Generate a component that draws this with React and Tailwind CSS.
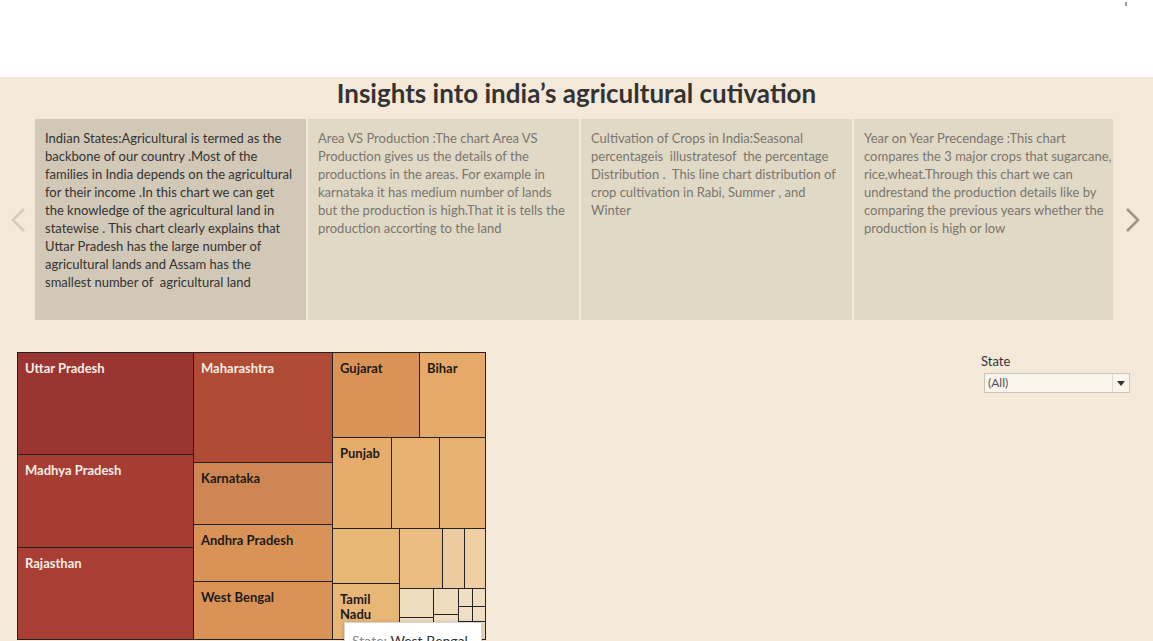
import React from "react";

const cards = [
  {
    active: true,
    lines: [
      "Indian States:Agricultural is termed as the",
      "backbone of our country .Most of the",
      "families in India depends on the agricultural",
      "for their income .In this chart we can get",
      "the knowledge of the agricultural land in",
      "statewise . This chart clearly explains that",
      "Uttar Pradesh has the large number of",
      "agricultural lands and Assam has the",
      "smallest number of  agricultural land",
    ],
  },
  {
    lines: [
      "Area VS Production :The chart Area VS",
      "Production gives us the details of the",
      "productions in the areas. For example in",
      "karnataka it has medium number of lands",
      "but the production is high.That it is tells the",
      "production accorting to the land",
    ],
  },
  {
    lines: [
      "Cultivation of Crops in India:Seasonal",
      "percentageis  illustratesof  the percentage",
      "Distribution .  This line chart distribution of",
      "crop cultivation in Rabi, Summer , and",
      "Winter",
    ],
  },
  {
    lines: [
      "Year on Year Precendage :This chart",
      "compares the 3 major crops that sugarcane,",
      "rice,wheat.Through this chart we can",
      "undrestand the production details like by",
      "comparing the previous years whether the",
      "production is high or low",
    ],
  },
];

function Chevron({ dir, className }) {
  return (
    <svg width="16" height="26" viewBox="0 0 16 26" className={className}>
      {dir === "left" ? (
        <path d="M14 2 L3 13 L14 24" fill="none" stroke="currentColor" strokeWidth="2.6" />
      ) : (
        <path d="M2 2 L13 13 L2 24" fill="none" stroke="currentColor" strokeWidth="2.6" />
      )}
    </svg>
  );
}

function Cell({ className = "", label, light, children }) {
  return (
    <div className={"min-w-0 min-h-0 overflow-hidden pl-[7px] pt-[8px] " + className}>
      {label && (
        <div
          className={
            "text-[13px] leading-[15px] font-bold " +
            (light ? "text-[#f6ece4]" : "text-[#1f1a17]")
          }
        >
          {label}
        </div>
      )}
      {children}
    </div>
  );
}

export default function App() {
  return (
    <div className="w-[1153px] h-[641px] overflow-hidden bg-[#f4e9d8] font-['Lato',sans-serif]">
      <div className="h-[77px] bg-white flex justify-end pr-[26px] pt-[2px]">
        <div className="w-[2px] h-[4px] bg-[#9a9a9a]" />
      </div>

      <h1 className="text-center text-[26px] leading-[32px] font-bold text-[#333333]">
        Insights into india’s agricultural cutivation
      </h1>

      <div className="mt-[10px] flex h-[201px] items-center">
        <div className="w-[35px] flex justify-center items-center text-[#d3cbbb]">
          <Chevron dir="left" />
        </div>
        <div className="w-[1078px] h-[201px] overflow-hidden flex gap-[2px]">
          {cards.map((c, i) => (
            <div
              key={i}
              className={
                "w-[271px] shrink-0 h-full overflow-hidden pl-[10px] pt-[10px] text-[13px] leading-[18px] " +
                (c.active ? "bg-[#d1c8b7] text-[#333333]" : "bg-[#e0d9c6] text-[#7a766e]")
              }
            >
              {c.lines.map((l, j) => (
                <div key={j} className="whitespace-pre">
                  {l}
                </div>
              ))}
            </div>
          ))}
        </div>
        <div className="flex-1 flex justify-center items-center text-[#9b958b]">
          <Chevron dir="right" />
        </div>
      </div>

      <div className="mt-[32px] flex">
        <div className="ml-[17px] relative w-[469px] h-[288px] bg-[#222222] p-px flex gap-px">
          {/* column 1 */}
          <div className="w-[175px] flex flex-col gap-px">
            <Cell className="h-[101px] bg-[#9b3532]" label="Uttar Pradesh" light />
            <Cell className="h-[92px] bg-[#a63d33]" label="Madhya Pradesh" light />
            <Cell className="flex-1 bg-[#a83f34]" label="Rajasthan" light />
          </div>
          {/* column 2 */}
          <div className="w-[138px] flex flex-col gap-px">
            <Cell className="h-[109px] bg-[#b04b35]" label="Maharashtra" light />
            <Cell className="h-[61px] bg-[#ce8754]" label="Karnataka" />
            <Cell className="h-[56px] bg-[#d99356]" label="Andhra Pradesh" />
            <Cell className="flex-1 bg-[#da9357]" label="West Bengal" />
          </div>
          {/* column 3 */}
          <div className="flex-1 flex flex-col gap-px">
            <div className="h-[84px] flex gap-px">
              <Cell className="w-[86px] bg-[#da9357]" label="Gujarat" />
              <Cell className="flex-1 bg-[#e5aa69]" label="Bihar" />
            </div>
            <div className="h-[90px] flex gap-px">
              <Cell className="w-[58px] bg-[#e5ac6b]" label="Punjab" />
              <Cell className="w-[47px] bg-[#e7b272]" />
              <Cell className="flex-1 bg-[#e7b374]" />
            </div>
            <div className="flex-1 flex gap-px">
              <div className="w-[66px] flex flex-col gap-px">
                <Cell className="h-[54px] bg-[#e8b677]" />
                <Cell className="flex-1 bg-[#e8b677]" label={<>Tamil<br />Nadu</>} />
              </div>
              <div className="flex-1 flex flex-col gap-px">
                <div className="h-[59px] flex gap-px">
                  <div className="w-[42px] bg-[#ebbd83]" />
                  <div className="w-[21px] bg-[#eecb9e]" />
                  <div className="flex-1 bg-[#efcfa3]" />
                </div>
                <div className="flex-1 flex gap-px">
                  <div className="w-[33px] flex flex-col gap-px">
                    <div className="h-[28px] bg-[#efdcbf]" />
                    <div className="flex-1 bg-[#efdcbf]" />
                  </div>
                  <div className="w-[24px] flex flex-col gap-px">
                    <div className="h-[25px] bg-[#efdcbf]" />
                    <div className="flex-1 bg-[#f0dec2]" />
                  </div>
                  <div className="flex-1 flex flex-col gap-px">
                    <div className="h-[17px] flex gap-px">
                      <div className="w-[13px] bg-[#f0dec2]" />
                      <div className="flex-1 bg-[#f0dec2]" />
                    </div>
                    <div className="h-[14px] flex gap-px">
                      <div className="w-[13px] bg-[#f0dfc4]" />
                      <div className="flex-1 bg-[#f0dfc4]" />
                    </div>
                    <div className="flex-1 flex gap-px">
                      <div className="w-[7px] bg-[#f1e0c6]" />
                      <div className="w-[5px] bg-[#f1e0c6]" />
                      <div className="flex-1 bg-[#f1e0c6]" />
                    </div>
                  </div>
                </div>
              </div>
            </div>
          </div>

          {/* tooltip */}
          <div className="absolute left-[327px] top-[270px] w-[138px] h-[40px] bg-white border border-[#d6d6d6] shadow-[0_1px_4px_rgba(0,0,0,0.25)] pl-[7px] pt-[9px] text-[14px] leading-[17px] whitespace-nowrap">
            <span className="text-[#8c8c8c]">State: </span>
            <span className="text-[#333333]">West Bengal</span>
          </div>
        </div>

        <div className="ml-[495px] pt-[1px] w-[149px]">
          <div className="text-[13px] leading-[16px] text-[#333333]">State</div>
          <div className="mt-[4px] ml-[3px] h-[20px] w-[146px] flex bg-[#faf4ea] border border-[#c9c6c0]">
            <div className="flex-1 pl-[3px] text-[12px] leading-[18px] text-[#4e5360]">(All)</div>
            <div className="w-[17px] border-l border-[#dedad2] flex items-center justify-center">
              <svg width="8" height="5" viewBox="0 0 8 5">
                <path d="M0 0 L8 0 L4 5 Z" fill="#333" />
              </svg>
            </div>
          </div>
        </div>
      </div>
    </div>
  );
}
